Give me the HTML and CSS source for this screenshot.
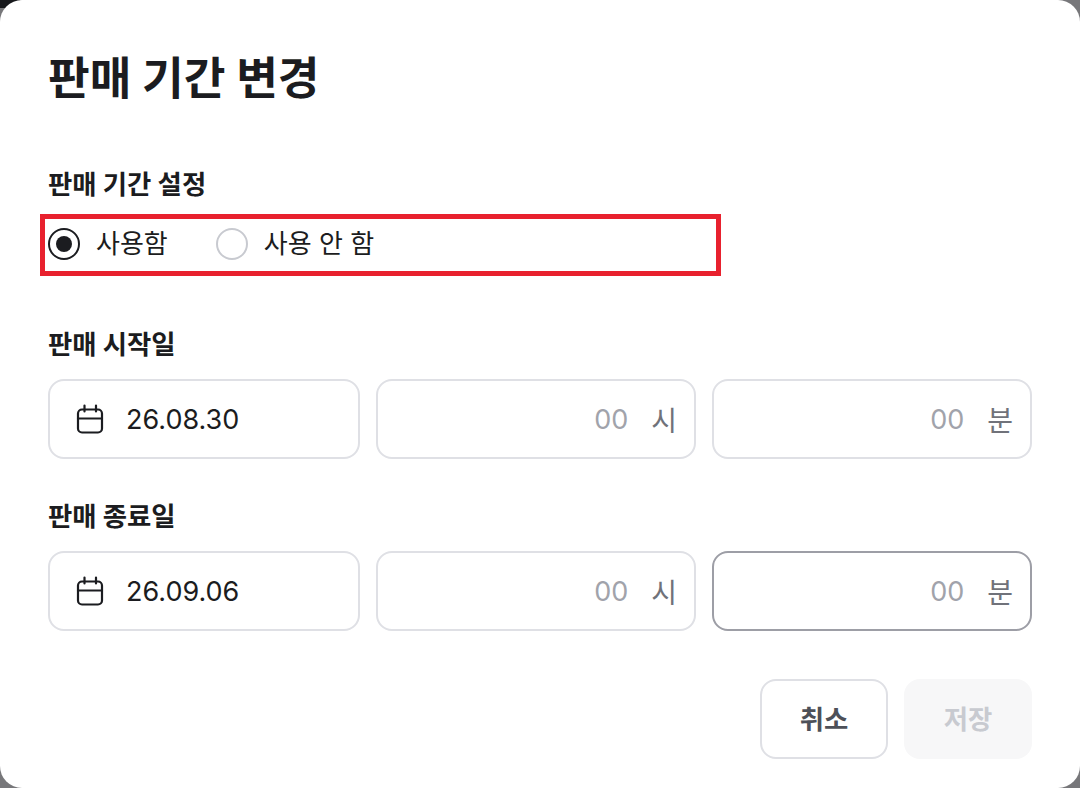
FILE: index.html
```html
<!DOCTYPE html>
<html lang="ko">
<head>
    <meta charset="UTF-8">
    <title>판매 기간 변경</title>
    <link rel="stylesheet" href="styles.css">
</head>
<body>
    <div class="modal">
        <h1 class="modal-title">판매 기간 변경</h1>

        <section class="usage">
            <h2 class="label">판매 기간 설정</h2>
            <div class="radio-group">
                <label class="radio">
                    <span class="radio-mark checked"></span>
                    <span>사용함</span>
                </label>
                <label class="radio">
                    <span class="radio-mark"></span>
                    <span>사용 안 함</span>
                </label>
            </div>
            <div class="highlight"></div>
        </section>

        <section class="period period-start">
            <h2 class="label">판매 시작일</h2>
            <div class="field-row">
                <div class="field date-field">
                    <svg class="calendar" viewBox="0 0 28 30" fill="none" stroke="#1b1c20" stroke-width="2.2" stroke-linecap="round" stroke-linejoin="round">
                        <rect x="2" y="5.5" width="24" height="23" rx="4"/>
                        <path d="M2 14.5h24M8.5 1.5v6M20 1.5v6"/>
                    </svg>
                    <span>26.08.30</span>
                </div>
                <div class="field time-field"><span class="placeholder">00</span><span class="unit">시</span></div>
                <div class="field time-field"><span class="placeholder">00</span><span class="unit">분</span></div>
            </div>
        </section>

        <section class="period period-end">
            <h2 class="label">판매 종료일</h2>
            <div class="field-row">
                <div class="field date-field">
                    <svg class="calendar" viewBox="0 0 28 30" fill="none" stroke="#1b1c20" stroke-width="2.2" stroke-linecap="round" stroke-linejoin="round">
                        <rect x="2" y="5.5" width="24" height="23" rx="4"/>
                        <path d="M2 14.5h24M8.5 1.5v6M20 1.5v6"/>
                    </svg>
                    <span>26.09.06</span>
                </div>
                <div class="field time-field"><span class="placeholder">00</span><span class="unit">시</span></div>
                <div class="field time-field focused"><span class="placeholder">00</span><span class="unit">분</span></div>
            </div>
        </section>

        <div class="actions">
            <button class="btn btn-cancel">취소</button>
            <button class="btn btn-save" disabled>저장</button>
        </div>
    </div>
</body>
</html>
```

FILE: styles.css
```css
* {
    box-sizing: border-box;
}

html, body {
    height: 100%;
}

body {
    margin: 0;
    overflow: hidden;
    background: linear-gradient(#17181c, #17181c) 0 0 / 20px 8px no-repeat, #77777a;
    font-family: "Inter", "Noto Sans CJK KR", sans-serif;
    color: #1b1c20;
}

.modal {
    height: 788px;
    padding: 49px 48px 0;
    background: #fff;
    border-radius: 22px;
}

.modal-title {
    margin: 0;
    font-size: 45.3px;
    line-height: 60px;
    font-weight: 700;
}

.label {
    margin: 0;
    font-size: 26.4px;
    line-height: 36px;
    font-weight: 700;
}

.usage {
    position: relative;
    margin-top: 57px;
}

.radio-group {
    display: flex;
    gap: 48px;
    margin-top: 24px;
}

.radio {
    display: flex;
    align-items: center;
    gap: 16px;
    font-size: 26px;
    line-height: 36px;
}

.radio-mark {
    display: flex;
    align-items: center;
    justify-content: center;
    width: 32px;
    height: 32px;
    border: 2px solid #c8cad0;
    border-radius: 50%;
}

.radio-mark.checked {
    border-color: #1b1c20;
}

.radio-mark.checked::after {
    content: "";
    width: 16px;
    height: 16px;
    background: #1b1c20;
    border-radius: 50%;
}

/* red annotation box over the radio row */
.highlight {
    position: absolute;
    left: -8px;
    top: 48px;
    width: 681px;
    height: 62px;
    border: 5px solid #e8212e;
}

.period-start {
    margin-top: 64px;
}

.period-end {
    margin-top: 39px;
}

.field-row {
    display: grid;
    grid-template-columns: 312px 320px 320px;
    gap: 16px;
    margin-top: 17px;
}

.field {
    display: flex;
    align-items: center;
    height: 80px;
    border: 2px solid #dfe0e5;
    border-radius: 16px;
    font-size: 27px;
}

.date-field {
    padding-left: 26px;
    gap: 22px;
}

.calendar {
    width: 28px;
    height: 30px;
}

.time-field {
    justify-content: flex-end;
    padding-right: 17px;
}

.time-field.focused {
    border-color: #9d9ea6;
}

.placeholder {
    color: #a1a3ab;
}

.unit {
    margin-left: 23px;
    font-size: 28px;
    color: #70727a;
}

.actions {
    display: flex;
    justify-content: flex-end;
    gap: 16px;
    margin-top: 48px;
}

.btn {
    width: 128px;
    height: 80px;
    padding: 0 0 3px;
    border-radius: 16px;
    font-family: inherit;
    font-size: 26.4px;
    font-weight: 700;
}

.btn-cancel {
    background: #fff;
    border: 2px solid #dfe0e5;
    color: #4d5058;
}

.btn-save {
    background: #f7f7f8;
    border: 0;
    color: #c8cad0;
}
```
